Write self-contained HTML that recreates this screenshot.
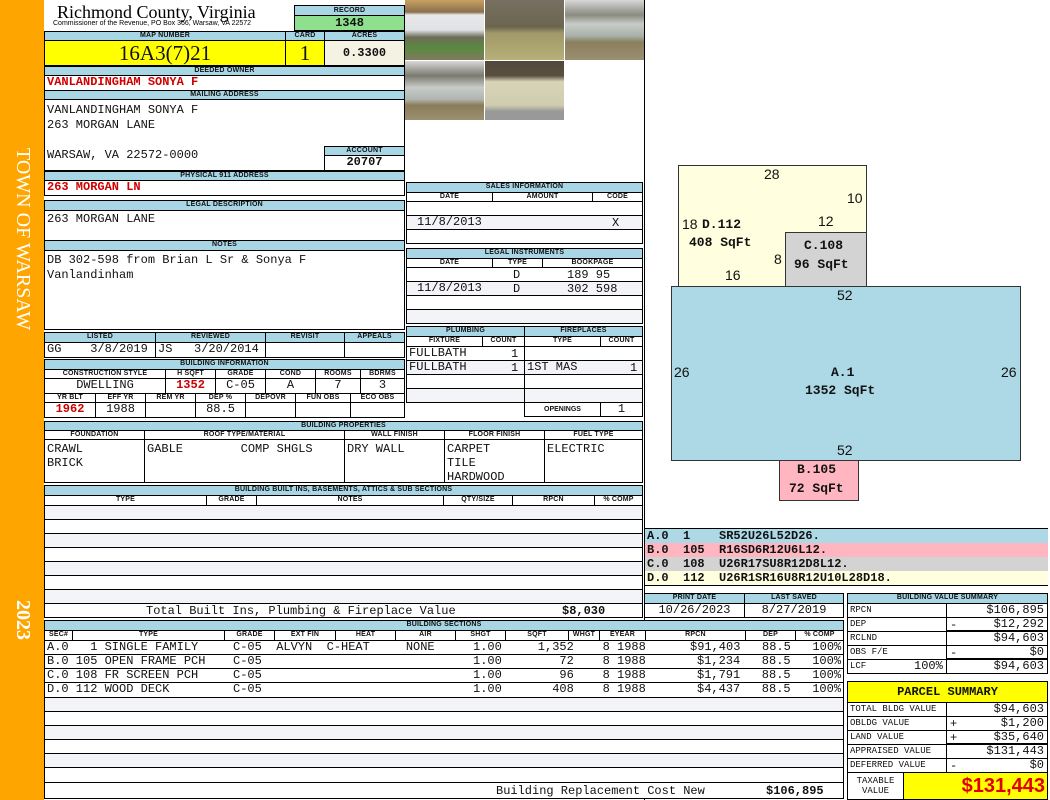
<!DOCTYPE html>
<html><head><meta charset="utf-8">
<style>
*{box-sizing:border-box;margin:0;padding:0}
body{width:1050px;height:800px;position:relative;background:#fff;overflow:hidden;font-family:"Liberation Mono",monospace}
div{position:absolute}
.h{background:#a9d6e5;border:1px solid #000;font:bold 7px/8px "Liberation Sans",sans-serif;text-align:center;color:#111;overflow:hidden;white-space:nowrap;letter-spacing:.2px}
.c{border:1px solid #000;background:#fff;font:12px/13px "Liberation Mono",monospace;overflow:hidden;white-space:nowrap;color:#111}
.r{text-align:right;padding-right:3px}
.m{text-align:center}
.red{color:#d00000;font-weight:bold}
.t{white-space:nowrap;font:12px/13px "Liberation Mono",monospace;color:#111}
.s{font:14px "Liberation Sans",sans-serif;color:#111;white-space:nowrap}
.sk{font:bold 13px "Liberation Mono",monospace;color:#111;white-space:nowrap}
.st{background:#f3f4f8}
.lab{font:9px/13px "Liberation Mono",monospace;padding-left:2px}
</style></head><body>

<div style="left:0;top:0;width:44px;height:800px;background:#ffa500"></div>
<div style="left:10px;top:148px;width:26px;height:240px;"><div style="left:0;top:0;transform-origin:0 0;transform:translate(24px,0) rotate(90deg);font:20px 'Liberation Serif',serif;color:#fff;white-space:nowrap">TOWN OF WARSAW</div></div>
<div style="left:10px;top:600px;width:26px;height:60px;"><div style="left:0;top:0;transform-origin:0 0;transform:translate(24px,0) rotate(90deg);font:bold 20px 'Liberation Serif',serif;color:#fff;white-space:nowrap">2023</div></div>

<div style="left:57px;top:2px;font:18px/20px 'Liberation Serif',serif;color:#000;white-space:nowrap">Richmond County, Virginia</div>
<div style="left:53px;top:20px;font:7px/8px 'Liberation Sans',sans-serif;color:#000;white-space:nowrap">Commissioner of the Revenue, PO Box 366, Warsaw, VA 22572</div>
<div class="h" style="left:294px;top:5px;width:111px;height:11px;line-height:9px">RECORD</div>
<div class="c m" style="left:294px;top:15px;width:111px;height:16px;background:#8ee08e;font-weight:bold;line-height:14px">1348</div>

<div class="h" style="left:44px;top:31px;width:242px;height:10px">MAP NUMBER</div>
<div class="h" style="left:285px;top:31px;width:40px;height:10px">CARD</div>
<div class="h" style="left:324px;top:31px;width:81px;height:10px">ACRES</div>
<div class="c m" style="left:44px;top:40px;width:242px;height:26px;background:#ffff00;font:21px/24px 'Liberation Serif',serif">16A3(7)21</div>
<div class="c m" style="left:285px;top:40px;width:40px;height:26px;background:#ffff00;font:21px/24px 'Liberation Serif',serif">1</div>
<div class="c m" style="left:324px;top:40px;width:81px;height:26px;background:#f4f2e2;font-weight:bold;line-height:24px">0.3300</div>

<div class="h" style="left:44px;top:66px;width:361px;height:10px">DEEDED OWNER</div>
<div class="c red" style="left:44px;top:75px;width:361px;height:16px;padding-left:2px">VANLANDINGHAM SONYA F</div>
<div class="h" style="left:44px;top:90px;width:361px;height:10px">MAILING ADDRESS</div>
<div class="c" style="left:44px;top:99px;width:361px;height:72px;padding:3px 2px;line-height:15px">VANLANDINGHAM SONYA F<br>263 MORGAN LANE<br><br>WARSAW, VA 22572-0000</div>
<div class="h" style="left:324px;top:146px;width:81px;height:10px">ACCOUNT</div>
<div class="c m" style="left:324px;top:155px;width:81px;height:16px;font-weight:bold">20707</div>
<div class="h" style="left:44px;top:171px;width:361px;height:10px">PHYSICAL 911 ADDRESS</div>
<div class="c red" style="left:44px;top:180px;width:361px;height:16px;padding-left:2px">263 MORGAN LN</div>
<div class="h" style="left:44px;top:200px;width:361px;height:11px">LEGAL DESCRIPTION</div>
<div class="c" style="left:44px;top:210px;width:361px;height:31px;padding:2px">263 MORGAN LANE</div>
<div class="h" style="left:44px;top:240px;width:361px;height:11px">NOTES</div>
<div class="c" style="left:44px;top:250px;width:361px;height:80px;padding:2px;line-height:15px">DB 302-598 from Brian L Sr &amp; Sonya F<br>Vanlandinham</div>

<div class="h" style="left:44px;top:332px;width:112px;height:11px">LISTED</div>
<div class="h" style="left:155px;top:332px;width:111px;height:11px">REVIEWED</div>
<div class="h" style="left:265px;top:332px;width:80px;height:11px">REVISIT</div>
<div class="h" style="left:344px;top:332px;width:61px;height:11px">APPEALS</div>
<div class="c" style="left:44px;top:342px;width:112px;height:16px;padding-left:2px">GG&nbsp;&nbsp;&nbsp;&nbsp;3/8/2019</div>
<div class="c" style="left:155px;top:342px;width:111px;height:16px;padding-left:2px">JS&nbsp;&nbsp;&nbsp;3/20/2014</div>
<div class="c" style="left:265px;top:342px;width:80px;height:16px"></div>
<div class="c" style="left:344px;top:342px;width:61px;height:16px"></div>

<div class="h" style="left:44px;top:359px;width:361px;height:11px">BUILDING INFORMATION</div>
<div class="h" style="left:44px;top:369px;width:122px;height:10px;background:#fff">CONSTRUCTION STYLE</div>
<div class="h" style="left:165px;top:369px;width:51px;height:10px;background:#fff">H SQFT</div>
<div class="h" style="left:215px;top:369px;width:51px;height:10px;background:#fff">GRADE</div>
<div class="h" style="left:265px;top:369px;width:51px;height:10px;background:#fff">COND</div>
<div class="h" style="left:315px;top:369px;width:46px;height:10px;background:#fff">ROOMS</div>
<div class="h" style="left:360px;top:369px;width:45px;height:10px;background:#fff">BDRMS</div>
<div class="c m" style="left:44px;top:378px;width:122px;height:16px">DWELLING</div>
<div class="c m red" style="left:165px;top:378px;width:51px;height:16px">1352</div>
<div class="c m" style="left:215px;top:378px;width:51px;height:16px">C-05</div>
<div class="c m" style="left:265px;top:378px;width:51px;height:16px">A</div>
<div class="c m" style="left:315px;top:378px;width:46px;height:16px">7</div>
<div class="c m" style="left:360px;top:378px;width:45px;height:16px">3</div>
<div class="h" style="left:44px;top:393px;width:52px;height:10px;background:#fff">YR BLT</div>
<div class="h" style="left:95px;top:393px;width:51px;height:10px;background:#fff">EFF YR</div>
<div class="h" style="left:145px;top:393px;width:51px;height:10px;background:#fff">REM YR</div>
<div class="h" style="left:195px;top:393px;width:51px;height:10px;background:#fff">DEP %</div>
<div class="h" style="left:245px;top:393px;width:51px;height:10px;background:#fff">DEPOVR</div>
<div class="h" style="left:295px;top:393px;width:56px;height:10px;background:#fff">FUN OBS</div>
<div class="h" style="left:350px;top:393px;width:55px;height:10px;background:#fff">ECO OBS</div>
<div class="c m red" style="left:44px;top:402px;width:52px;height:16px">1962</div>
<div class="c m" style="left:95px;top:402px;width:51px;height:16px">1988</div>
<div class="c" style="left:145px;top:402px;width:51px;height:16px"></div>
<div class="c m" style="left:195px;top:402px;width:51px;height:16px">88.5</div>
<div class="c" style="left:245px;top:402px;width:51px;height:16px"></div>
<div class="c" style="left:295px;top:402px;width:56px;height:16px"></div>
<div class="c" style="left:350px;top:402px;width:55px;height:16px"></div>

<div style="left:405px;top:0;width:79px;height:60px;background:linear-gradient(#c9a060 0,#8a7050 20%,#e8e8e8 25%,#dfe2e6 50%,#6c6c58 62%,#5a8a40 80%,#807a60 100%)"></div>
<div style="left:485px;top:0;width:79px;height:60px;background:linear-gradient(#777060 0,#6c6550 45%,#a09868 55%,#b8b078 100%)"></div>
<div style="left:565px;top:0;width:79px;height:60px;background:linear-gradient(#d8d8d8 0,#8a8a80 25%,#c8ccc8 40%,#a8b0a8 60%,#8a8060 70%,#9a9070 100%)"></div>
<div style="left:405px;top:61px;width:79px;height:59px;background:linear-gradient(#d8d8d8 0,#7a7a70 25%,#c8ccc8 45%,#b0b4b0 65%,#8a7c58 75%,#9a9070 100%)"></div>
<div style="left:485px;top:61px;width:79px;height:59px;background:linear-gradient(#50483c 0,#5a5040 25%,#d8d4b8 35%,#d0ccb0 75%,#9a9a98 85%,#9a9898 100%)"></div>

<div style="left:644px;top:0;width:1px;height:800px;background:#000"></div>

<div class="h" style="left:406px;top:182px;width:237px;height:11px">SALES INFORMATION</div>
<div class="h" style="left:406px;top:192px;width:87px;height:10px;background:#fff">DATE</div>
<div class="h" style="left:492px;top:192px;width:101px;height:10px;background:#fff">AMOUNT</div>
<div class="h" style="left:592px;top:192px;width:51px;height:10px;background:#fff">CODE</div>
<div class="c" style="left:406px;top:201px;width:237px;height:15px"></div>
<div class="c st" style="left:406px;top:215px;width:237px;height:15px;padding-left:10px">11/8/2013</div>
<div class="t" style="left:612px;top:217px">X</div>
<div class="c" style="left:406px;top:229px;width:237px;height:15px"></div>

<div class="h" style="left:406px;top:248px;width:237px;height:11px">LEGAL INSTRUMENTS</div>
<div class="h" style="left:406px;top:258px;width:87px;height:10px;background:#fff">DATE</div>
<div class="h" style="left:492px;top:258px;width:51px;height:10px;background:#fff">TYPE</div>
<div class="h" style="left:542px;top:258px;width:101px;height:10px;background:#fff">BOOKPAGE</div>
<div class="c" style="left:406px;top:267px;width:237px;height:15px"></div>
<div class="c st" style="left:406px;top:281px;width:237px;height:15px;padding-left:10px">11/8/2013</div>
<div class="t" style="left:513px;top:269px">D</div><div class="t" style="left:567px;top:269px">189 95</div>
<div class="t" style="left:513px;top:283px">D</div><div class="t" style="left:567px;top:283px">302 598</div>
<div class="c" style="left:406px;top:295px;width:237px;height:15px"></div>
<div class="c st" style="left:406px;top:309px;width:237px;height:15px"></div>

<div class="h" style="left:406px;top:326px;width:119px;height:11px">PLUMBING</div>
<div class="h" style="left:524px;top:326px;width:119px;height:11px">FIREPLACES</div>
<div class="h" style="left:406px;top:336px;width:77px;height:11px;background:#fff">FIXTURE</div>
<div class="h" style="left:482px;top:336px;width:43px;height:11px;background:#fff">COUNT</div>
<div class="h" style="left:524px;top:336px;width:77px;height:11px;background:#fff">TYPE</div>
<div class="h" style="left:600px;top:336px;width:43px;height:11px;background:#fff">COUNT</div>
<div class="c" style="left:406px;top:346px;width:119px;height:15px;padding-left:2px">FULLBATH</div><div class="t" style="left:511px;top:348px">1</div>
<div class="c st" style="left:406px;top:360px;width:119px;height:15px;padding-left:2px">FULLBATH</div><div class="t" style="left:511px;top:362px">1</div>
<div class="c" style="left:406px;top:374px;width:119px;height:15px"></div>
<div class="c st" style="left:406px;top:388px;width:119px;height:15px"></div>
<div class="c" style="left:524px;top:346px;width:119px;height:15px"></div>
<div class="c st" style="left:524px;top:360px;width:119px;height:15px;padding-left:2px">1ST MAS</div><div class="t" style="left:630px;top:362px">1</div>
<div class="c" style="left:524px;top:374px;width:119px;height:15px"></div>
<div class="c st" style="left:524px;top:388px;width:119px;height:15px"></div>
<div class="c" style="left:524px;top:402px;width:77px;height:15px;font:bold 7px/13px 'Liberation Sans',sans-serif;text-align:center">OPENINGS</div>
<div class="c m" style="left:600px;top:402px;width:43px;height:15px">1</div>

<div class="h" style="left:44px;top:421px;width:599px;height:10px">BUILDING PROPERTIES</div>
<div class="h" style="left:44px;top:430px;width:101px;height:10px;background:#fff">FOUNDATION</div>
<div class="h" style="left:144px;top:430px;width:201px;height:10px;background:#fff">ROOF TYPE/MATERIAL</div>
<div class="h" style="left:344px;top:430px;width:101px;height:10px;background:#fff">WALL FINISH</div>
<div class="h" style="left:444px;top:430px;width:101px;height:10px;background:#fff">FLOOR FINISH</div>
<div class="h" style="left:544px;top:430px;width:99px;height:10px;background:#fff">FUEL TYPE</div>
<div class="c" style="left:44px;top:439px;width:101px;height:44px;padding:2px;line-height:14px">CRAWL<br>BRICK</div>
<div class="c" style="left:144px;top:439px;width:201px;height:44px;padding:2px;line-height:14px">GABLE&nbsp;&nbsp;&nbsp;&nbsp;&nbsp;&nbsp;&nbsp;&nbsp;COMP SHGLS</div>
<div class="c" style="left:344px;top:439px;width:101px;height:44px;padding:2px;line-height:14px">DRY WALL</div>
<div class="c" style="left:444px;top:439px;width:101px;height:44px;padding:2px;line-height:14px">CARPET<br>TILE<br>HARDWOOD</div>
<div class="c" style="left:544px;top:439px;width:99px;height:44px;padding:2px;line-height:14px">ELECTRIC</div>

<div class="h" style="left:44px;top:485px;width:599px;height:11px">BUILDING BUILT INS, BASEMENTS, ATTICS &amp; SUB SECTIONS</div>
<div class="h" style="left:44px;top:495px;width:163px;height:11px;background:#fff">TYPE</div>
<div class="h" style="left:206px;top:495px;width:51px;height:11px;background:#fff">GRADE</div>
<div class="h" style="left:256px;top:495px;width:188px;height:11px;background:#fff">NOTES</div>
<div class="h" style="left:443px;top:495px;width:70px;height:11px;background:#fff">QTY/SIZE</div>
<div class="h" style="left:512px;top:495px;width:83px;height:11px;background:#fff">RPCN</div>
<div class="h" style="left:594px;top:495px;width:49px;height:11px;background:#fff">% COMP</div>
<div class="c st" style="left:44px;top:505px;width:599px;height:15px"></div>
<div class="c" style="left:44px;top:519px;width:599px;height:15px"></div>
<div class="c st" style="left:44px;top:533px;width:599px;height:15px"></div>
<div class="c" style="left:44px;top:547px;width:599px;height:15px"></div>
<div class="c st" style="left:44px;top:561px;width:599px;height:15px"></div>
<div class="c" style="left:44px;top:575px;width:599px;height:15px"></div>
<div class="c st" style="left:44px;top:589px;width:599px;height:15px"></div>
<div class="c" style="left:44px;top:603px;width:599px;height:15px"></div>
<div class="t" style="left:146px;top:605px">Total Built Ins, Plumbing &amp; Fireplace Value</div>
<div class="t" style="left:562px;top:605px;font-weight:bold">$8,030</div>

<div class="h" style="left:644px;top:593px;width:101px;height:11px">PRINT DATE</div>
<div class="h" style="left:744px;top:593px;width:100px;height:11px">LAST SAVED</div>
<div class="c m" style="left:644px;top:603px;width:101px;height:15px">10/26/2023</div>
<div class="c m" style="left:744px;top:603px;width:100px;height:15px">8/27/2019</div>

<div class="h" style="left:44px;top:620px;width:800px;height:11px">BUILDING SECTIONS</div>
<div class="h" style="left:44px;top:630px;width:29px;height:11px;background:#fff">SEC#</div>
<div class="h" style="left:72px;top:630px;width:153px;height:11px;background:#fff">TYPE</div>
<div class="h" style="left:224px;top:630px;width:51px;height:11px;background:#fff">GRADE</div>
<div class="h" style="left:274px;top:630px;width:62px;height:11px;background:#fff">EXT FIN</div>
<div class="h" style="left:335px;top:630px;width:61px;height:11px;background:#fff">HEAT</div>
<div class="h" style="left:395px;top:630px;width:61px;height:11px;background:#fff">AIR</div>
<div class="h" style="left:455px;top:630px;width:51px;height:11px;background:#fff">SHGT</div>
<div class="h" style="left:505px;top:630px;width:64px;height:11px;background:#fff">SQFT</div>
<div class="h" style="left:568px;top:630px;width:32px;height:11px;background:#fff">WHGT</div>
<div class="h" style="left:599px;top:630px;width:47px;height:11px;background:#fff">EYEAR</div>
<div class="h" style="left:645px;top:630px;width:101px;height:11px;background:#fff">RPCN</div>
<div class="h" style="left:745px;top:630px;width:51px;height:11px;background:#fff">DEP</div>
<div class="h" style="left:795px;top:630px;width:49px;height:11px;background:#fff">% COMP</div>

<div class="c" style="left:44px;top:640px;width:800px;height:15px"></div>
<div class="c" style="left:44px;top:654px;width:800px;height:15px"></div>
<div class="c" style="left:44px;top:668px;width:800px;height:15px"></div>
<div class="c" style="left:44px;top:682px;width:800px;height:16px"></div>
<div class="c st" style="left:44px;top:697px;width:800px;height:15px"></div>
<div class="c" style="left:44px;top:711px;width:800px;height:15px"></div>
<div class="c st" style="left:44px;top:725px;width:800px;height:15px"></div>
<div class="c" style="left:44px;top:739px;width:800px;height:15px"></div>
<div class="c st" style="left:44px;top:753px;width:800px;height:15px"></div>
<div class="c" style="left:44px;top:767px;width:800px;height:16px"></div>
<div class="c" style="left:44px;top:782px;width:800px;height:17px"></div>

<div class="t" style="left:47px;top:641px">A.0&nbsp;&nbsp;&nbsp;1 SINGLE FAMILY</div>
<div class="t" style="left:47px;top:655px">B.0 105 OPEN FRAME PCH</div>
<div class="t" style="left:47px;top:669px">C.0 108 FR SCREEN PCH</div>
<div class="t" style="left:47px;top:683px">D.0 112 WOOD DECK</div>
<div class="t" style="left:233px;top:641px">C-05&nbsp;&nbsp;ALVYN&nbsp;&nbsp;C-HEAT&nbsp;&nbsp;&nbsp;&nbsp;&nbsp;NONE</div>
<div class="t" style="left:233px;top:655px">C-05</div>
<div class="t" style="left:233px;top:669px">C-05</div>
<div class="t" style="left:233px;top:683px">C-05</div>
<div class="t" style="left:473px;top:641px">1.00&nbsp;&nbsp;&nbsp;&nbsp;&nbsp;1,352&nbsp;&nbsp;&nbsp;&nbsp;8 1988</div>
<div class="t" style="left:473px;top:655px">1.00&nbsp;&nbsp;&nbsp;&nbsp;&nbsp;&nbsp;&nbsp;&nbsp;72&nbsp;&nbsp;&nbsp;&nbsp;8 1988</div>
<div class="t" style="left:473px;top:669px">1.00&nbsp;&nbsp;&nbsp;&nbsp;&nbsp;&nbsp;&nbsp;&nbsp;96&nbsp;&nbsp;&nbsp;&nbsp;8 1988</div>
<div class="t" style="left:473px;top:683px">1.00&nbsp;&nbsp;&nbsp;&nbsp;&nbsp;&nbsp;&nbsp;408&nbsp;&nbsp;&nbsp;&nbsp;8 1988</div>
<div class="t" style="left:690px;top:641px">$91,403&nbsp;&nbsp;&nbsp;88.5&nbsp;&nbsp;&nbsp;100%</div>
<div class="t" style="left:697px;top:655px">$1,234&nbsp;&nbsp;&nbsp;88.5&nbsp;&nbsp;&nbsp;100%</div>
<div class="t" style="left:697px;top:669px">$1,791&nbsp;&nbsp;&nbsp;88.5&nbsp;&nbsp;&nbsp;100%</div>
<div class="t" style="left:697px;top:683px">$4,437&nbsp;&nbsp;&nbsp;88.5&nbsp;&nbsp;&nbsp;100%</div>
<div class="t" style="left:496px;top:785px">Building Replacement Cost New</div>
<div class="t" style="left:766px;top:785px;font-weight:bold">$106,895</div>

<div style="left:678px;top:165px;width:189px;height:122px;background:#ffffe0;border:1px solid #333"></div>
<div style="left:785px;top:232px;width:82px;height:55px;background:#d3d3d3;border:1px solid #333"></div>
<div style="left:671px;top:286px;width:350px;height:175px;background:#add8e6;border:1px solid #333"></div>
<div style="left:779px;top:460px;width:80px;height:41px;background:#ffb6c1;border:1px solid #333"></div>
<div class="s" style="left:764px;top:166px">28</div>
<div class="s" style="left:847px;top:190px">10</div>
<div class="s" style="left:818px;top:213px">12</div>
<div class="s" style="left:682px;top:216px">18</div>
<div class="sk" style="left:702px;top:217px">D.112</div>
<div class="sk" style="left:689px;top:235px">408 SqFt</div>
<div class="s" style="left:774px;top:251px">8</div>
<div class="s" style="left:725px;top:267px">16</div>
<div class="sk" style="left:804px;top:238px">C.108</div>
<div class="sk" style="left:794px;top:257px">96 SqFt</div>
<div class="s" style="left:837px;top:287px">52</div>
<div class="s" style="left:674px;top:364px">26</div>
<div class="s" style="left:1001px;top:364px">26</div>
<div class="sk" style="left:831px;top:365px">A.1</div>
<div class="sk" style="left:805px;top:383px">1352 SqFt</div>
<div class="s" style="left:837px;top:442px">52</div>
<div class="sk" style="left:797px;top:462px">B.105</div>
<div class="sk" style="left:789px;top:481px">72 SqFt</div>

<div style="left:645px;top:528px;width:403px;height:58px;border:1px solid #000;border-left:none"></div>
<div class="sk" style="left:645px;top:529px;width:403px;height:14px;background:#add8e6;font-size:12px;padding-left:2px">A.0&nbsp;&nbsp;1&nbsp;&nbsp;&nbsp;&nbsp;SR52U26L52D26.</div>
<div class="sk" style="left:645px;top:543px;width:403px;height:14px;background:#ffb6c1;font-size:12px;padding-left:2px">B.0&nbsp;&nbsp;105&nbsp;&nbsp;R16SD6R12U6L12.</div>
<div class="sk" style="left:645px;top:557px;width:403px;height:14px;background:#d3d3d3;font-size:12px;padding-left:2px">C.0&nbsp;&nbsp;108&nbsp;&nbsp;U26R17SU8R12D8L12.</div>
<div class="sk" style="left:645px;top:571px;width:403px;height:14px;background:#ffffe0;font-size:12px;padding-left:2px">D.0&nbsp;&nbsp;112&nbsp;&nbsp;U26R1SR16U8R12U10L28D18.</div>

<div class="h" style="left:847px;top:593px;width:201px;height:11px">BUILDING VALUE SUMMARY</div>
<div class="c lab" style="left:847px;top:603px;width:100px;height:15px">RPCN</div>
<div class="c r" style="left:946px;top:603px;width:102px;height:15px">$106,895</div>
<div class="c lab" style="left:847px;top:617px;width:100px;height:15px">DEP</div>
<div class="c r" style="left:946px;top:617px;width:102px;height:15px;border-bottom:2px solid #000">$12,292</div>
<div class="t" style="left:950px;top:619px">-</div>
<div class="c lab" style="left:847px;top:631px;width:100px;height:15px">RCLND</div>
<div class="c r" style="left:946px;top:631px;width:102px;height:15px">$94,603</div>
<div class="c lab" style="left:847px;top:645px;width:100px;height:15px">OBS F/E</div>
<div class="c r" style="left:946px;top:645px;width:102px;height:15px;border-bottom:2px solid #000">$0</div>
<div class="t" style="left:950px;top:647px">-</div>
<div class="c lab" style="left:847px;top:659px;width:100px;height:15px">LCF<span style="position:absolute;left:66px;font-size:12px">100%</span></div>
<div class="c r" style="left:946px;top:659px;width:102px;height:15px">$94,603</div>

<div class="c m" style="left:847px;top:681px;width:201px;height:22px;background:#ffff00;font-weight:bold;line-height:20px">PARCEL SUMMARY</div>
<div class="c lab" style="left:847px;top:702px;width:100px;height:15px">TOTAL BLDG VALUE</div>
<div class="c r" style="left:946px;top:702px;width:102px;height:15px">$94,603</div>
<div class="c lab" style="left:847px;top:716px;width:100px;height:15px">OBLDG VALUE</div>
<div class="c r" style="left:946px;top:716px;width:102px;height:15px">$1,200</div>
<div class="t" style="left:950px;top:718px">+</div>
<div class="c lab" style="left:847px;top:730px;width:100px;height:15px">LAND VALUE</div>
<div class="c r" style="left:946px;top:730px;width:102px;height:15px;border-bottom:2px solid #000">$35,640</div>
<div class="t" style="left:950px;top:732px">+</div>
<div class="c lab" style="left:847px;top:744px;width:100px;height:15px">APPRAISED VALUE</div>
<div class="c r" style="left:946px;top:744px;width:102px;height:15px">$131,443</div>
<div class="c lab" style="left:847px;top:758px;width:100px;height:15px">DEFERRED VALUE</div>
<div class="c r" style="left:946px;top:758px;width:102px;height:15px">$0</div>
<div class="t" style="left:950px;top:760px">-</div>
<div class="c" style="left:847px;top:772px;width:57px;height:28px;font:9px/10px 'Liberation Mono',monospace;text-align:center;padding-top:3px">TAXABLE<br>VALUE</div>
<div class="c r" style="left:903px;top:772px;width:145px;height:28px;background:#ffff00;color:#e00000;font:bold 20px/26px 'Liberation Sans',sans-serif;padding-right:2px">$131,443</div>

</body></html>
